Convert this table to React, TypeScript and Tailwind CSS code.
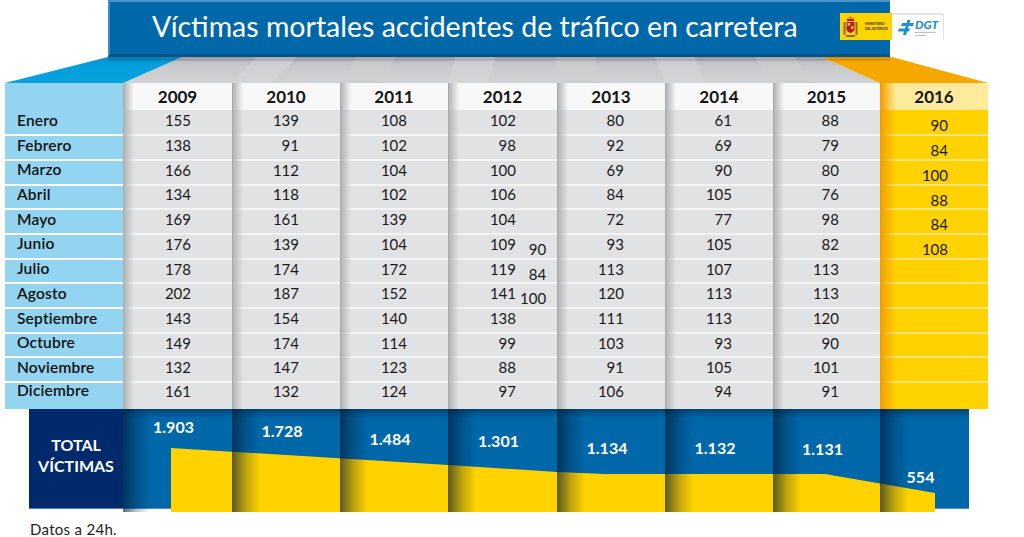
const months = [
  "Enero",
  "Febrero",
  "Marzo",
  "Abril",
  "Mayo",
  "Junio",
  "Julio",
  "Agosto",
  "Septiembre",
  "Octubre",
  "Noviembre",
  "Diciembre",
];

type Year = {
  year: string;
  w: string;
  bw: string;
  vals: (number | null)[];
  total: string;
  tt: string;
};

const years: Year[] = [
  { year: "2009", w: "w-[109px]", bw: "w-[109px]", vals: [155, 138, 166, 134, 169, 176, 178, 202, 143, 149, 132, 161], total: "1.903", tt: "pt-[8px]" },
  { year: "2010", w: "w-[108px]", bw: "w-[108px]", vals: [139, 91, 112, 118, 161, 139, 174, 187, 154, 174, 147, 132], total: "1.728", tt: "pt-[12px]" },
  { year: "2011", w: "w-[108px]", bw: "w-[108px]", vals: [108, 102, 104, 102, 139, 104, 172, 152, 140, 114, 123, 124], total: "1.484", tt: "pt-[20px]" },
  { year: "2012", w: "w-[109px]", bw: "w-[109px]", vals: [102, 98, 100, 106, 104, 109, 119, 141, 138, 99, 88, 97], total: "1.301", tt: "pt-[22px]" },
  { year: "2013", w: "w-[108px]", bw: "w-[108px]", vals: [80, 92, 69, 84, 72, 93, 113, 120, 111, 103, 91, 106], total: "1.134", tt: "pt-[29px]" },
  { year: "2014", w: "w-[108px]", bw: "w-[108px]", vals: [61, 69, 90, 105, 77, 105, 107, 113, 113, 93, 105, 94], total: "1.132", tt: "pt-[29px]" },
  { year: "2015", w: "w-[107px]", bw: "w-[107px]", vals: [88, 79, 80, 76, 98, 82, 113, 113, 120, 90, 101, 91], total: "1.131", tt: "pt-[30px]" },
];

const current: Year = {
  year: "2016",
  w: "w-[108px]",
  bw: "w-[89px]",
  vals: [90, 84, 100, 88, 84, 108, null, null, null, null, null, null],
  total: "554",
  tt: "pt-[58px]",
};

// Row boxes: header 26.5px, then 12 rows; separators sit on the top edge of every row after the first.
// The last row is a little taller, so its text sits higher in the box.
function rowBox(i: number) {
  if (i === 0) return "h-[24.7px] pb-[3px]";
  if (i === 11) return "h-[27.8px] border-t-2 pb-[10px]";
  return "h-[24.7px] border-t-2 pb-[4.4px]";
}

function rowBoxLow(i: number) {
  if (i === 0) return "h-[24.7px] pt-[7px]";
  if (i === 11) return "h-[27.8px] border-t-2";
  return "h-[24.7px] border-t-2 pt-[6px]";
}

function Logos() {
  return (
    <div className="absolute left-[840px] top-[13px] flex h-[27px]">
      <div className="flex w-[52px] items-center gap-[7px] bg-[#ffd400] pl-[3px]">
        <svg width="15" height="22" viewBox="0 0 15 22">
          <path d="M4 3 L7.5 0.5 L11 3 L11 5 L4 5 Z" fill="#c8102e" />
          <rect x="5" y="1.5" width="5" height="1.5" fill="#e0a800" />
          <rect x="0.5" y="6" width="2" height="13" fill="#8a6d1a" />
          <rect x="12.5" y="6" width="2" height="13" fill="#8a6d1a" />
          <path d="M3.5 6 H11.5 V14 Q7.5 20 3.5 14 Z" fill="#c8102e" />
          <rect x="4.5" y="7" width="3" height="3" fill="#e8b400" />
          <rect x="7.5" y="10" width="3" height="3" fill="#e8b400" />
          <rect x="4.5" y="10" width="3" height="3" fill="#b11226" />
          <circle cx="7.5" cy="10" r="1.2" fill="#2a5ca8" />
          <rect x="3" y="19" width="9" height="2" fill="#8a6d1a" />
        </svg>
        <div className="flex flex-col text-[3.4px] font-bold leading-[4.5px] text-[#3a2a00]">
          <span>MINISTERIO</span>
          <span>DEL INTERIOR</span>
        </div>
      </div>
      <div className="flex w-[52px] items-center gap-[1px] border-t-2 border-r border-[#e3e4e6] bg-white pl-[6px]">
        <svg width="16" height="15" viewBox="0 0 16 15">
          <path d="M4 3 L16 3 L15 6 L3 6 Z" fill="#1f8fd0" />
          <path d="M1 8.5 L12 8.5 L11 11.5 L0 11.5 Z" fill="#1f8fd0" />
          <path d="M9.5 0 L12.5 0 L8 15 L5 15 Z" fill="#1f8fd0" />
        </svg>
        <div className="flex flex-col">
          <span className="text-[12px] font-black italic leading-[12px] text-[#1f8fd0]">DGT</span>
          <span className="text-[2.6px] leading-[3px] text-[#555]">Dirección General</span>
          <span className="text-[2.6px] leading-[3px] text-[#555]">de Tráfico</span>
        </div>
      </div>
    </div>
  );
}

function Roof() {
  // Perspective top faces of the table columns, half hidden behind the title bar.
  const dividers = [232, 340, 448, 557, 665, 773];
  return (
    <svg className="block" width="1024" height="26" viewBox="0 0 1024 26">
      <defs>
        <linearGradient id="roofGray" x1="0" y1="0" x2="0" y2="1">
          <stop offset="0" stopColor="#b0b2b4" />
          <stop offset="0.35" stopColor="#c8cacb" />
          <stop offset="1" stopColor="#d1d2d3" />
        </linearGradient>
        <linearGradient id="roofBlue" x1="0" y1="0" x2="0" y2="1">
          <stop offset="0" stopColor="#0a8fcb" />
          <stop offset="0.3" stopColor="#049fdc" />
          <stop offset="1" stopColor="#07a1de" />
        </linearGradient>
      </defs>
      <polygon points="123,26 182,0 822,0 880,26" fill="url(#roofGray)" />
      {dividers.map((x, i) => {
        const top = x + (540 - x) * 0.08;
        return (
          <polygon
            key={x}
            points={`${x},26 ${top},0 ${top + 40},0 ${x + 40},26`}
            fill={i % 2 === 0 ? "#d6d7d8" : "#cdcfd0"}
            opacity="0.55"
          />
        );
      })}
      <polygon points="5,26 108,0 182,0 123,26" fill="url(#roofBlue)" />
      <polygon points="880,26 822,0 892,0 988,26" fill="#f6a800" />
      <rect x="108" y="0" width="782" height="4" fill="#000" opacity="0.12" />
    </svg>
  );
}

function YearColumn({ c, highlight }: { c: Year; highlight?: boolean }) {
  const sep = highlight ? "border-[#ffe57c]" : "border-[#f4f4f5]";
  return (
    <div className={`${c.w} relative flex flex-col ${highlight ? "bg-[#ffd200]" : "bg-[#e1e2e4]"}`}>
      <div
        className={`flex h-[26.5px] items-center justify-center text-[17px] font-bold text-[#141414] ${
          highlight ? "bg-[#ffeb9b]" : "bg-[#f8f8f8]"
        }`}
      >
        {c.year}
      </div>
      {c.vals.map((v, i) => (
        <div
          key={i}
          className={`${highlight ? rowBoxLow(i) : rowBox(i)} ${sep} flex items-center justify-end text-[15px] text-[#1a1a1a] ${
            highlight ? "pr-[40px]" : "pr-[41px]"
          }`}
        >
          {v}
        </div>
      ))}
      {c.year === "2012" && (
        <div className="absolute left-[72px] top-[154px] flex flex-col items-end text-[15px] leading-[24.5px] text-[#1a1a1a]">
          <span>90</span>
          <span>84</span>
          <span>100</span>
        </div>
      )}
      <div
        className={`pointer-events-none absolute inset-y-0 left-0 border-l bg-linear-to-r to-transparent ${
          highlight ? "w-[16px] border-[#f0a000] from-[#f2a100]" : "w-[11px] border-[#a9abad] from-[#b4b5b7]"
        }`}
      />
    </div>
  );
}

function TotalBand() {
  const cols = [...years, current];
  return (
    <div className="flex">
      <div className="ml-[29px] flex h-[100px] w-[94px] flex-col items-center justify-center border-b border-[#4d7cc0] bg-[#002a6c] pb-[6px] text-center text-[16px] font-bold leading-[21px] text-white">
        <span>TOTAL</span>
        <span>VÍCTIMAS</span>
      </div>
      <div className="relative h-[100px] w-[846px] border-b border-[#4f8fcf] bg-[#0067a8]">
        <svg className="absolute left-0 top-0" width="846" height="104" viewBox="0 0 846 104">
          <polygon
            points="48,39 325,56 434,63 482,65 702,65 812,84 812,103 48,103"
            fill="#ffd200"
          />
        </svg>
        <div className="absolute inset-x-0 top-0 h-[9px] bg-linear-to-b from-[#00223f]/50 to-transparent" />
        <div className="relative flex h-full">
          {cols.map((c) => (
            <div key={c.year} className={`${c.bw} relative h-[103px] ${c.tt}`}>
              <div className="absolute inset-y-0 left-0 w-[28px] bg-linear-to-r from-[#001a33]/65 via-[#001a33]/25 to-transparent" />
              <div className="relative pr-[8px] text-center text-[16px] font-bold leading-[20px] text-white">
                {c.total}
              </div>
            </div>
          ))}
        </div>
      </div>
    </div>
  );
}

export default function App() {
  return (
    <div className="relative h-[537px] w-[1024px] overflow-hidden bg-white font-['Lato','Liberation_Sans',sans-serif] text-[#1a1a1a]">
      <div className="flex h-[57px]">
        <div className="ml-[108px] flex h-[57px] w-[782px] items-center border-l-2 border-t-2 border-b-[3px] border-l-[#3d8cc3] border-t-[#4b93c7] border-b-[#00548a] bg-[#0068a9] pb-[3px] pl-[42px]">
          <h1 className="text-[28.5px] font-normal text-white">
            Víctimas mortales accidentes de tráfico en carretera
          </h1>
        </div>
      </div>
      <Logos />

      <Roof />

      <div className="flex">
        <div className="ml-[5px] flex w-[118px] flex-col bg-[#93d4f0]">
          <div className="h-[26.5px]" />
          {months.map((m, i) => (
            <div
              key={m}
              className={`${rowBox(i)} flex items-center border-white pl-[12px] text-[15.5px] font-semibold tracking-[0.2px] text-[#111]`}
            >
              {m}
            </div>
          ))}
        </div>
        {years.map((c) => (
          <YearColumn key={c.year} c={c} />
        ))}
        <YearColumn c={current} highlight />
      </div>

      <TotalBand />

      <div className="pl-[30px] pt-[11px] text-[15px] leading-[18px] tracking-[0.3px] text-[#222]">Datos a 24h.</div>
    </div>
  );
}
